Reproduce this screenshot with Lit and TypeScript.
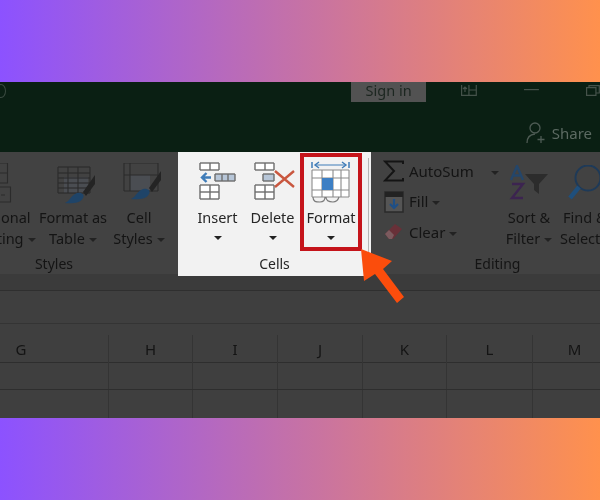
import { LitElement, html, css, svg } from "lit";
import { customElement } from "lit/decorators.js";

const caret = html`<svg class="caret" viewBox="0 0 8 4" width="8" height="4"><path d="M0 0H8L4 4Z" fill="currentColor"/></svg>`;

const grid = (x: number, y: number, cols: number[], rows: number[], s = "#6d6d6d", w = 1.4) => svg`
  ${cols.map((c) => svg`<line x1=${x + c} y1=${y} x2=${x + c} y2=${y + rows[rows.length - 1]} stroke=${s} stroke-width=${w}/>`)}
  ${rows.map((r) => svg`<line x1=${x} y1=${y + r} x2=${x + cols[cols.length - 1]} y2=${y + r} stroke=${s} stroke-width=${w}/>`)}`;

const insertIcon = html`<svg class="ic" width="37" height="38" viewBox="0 0 37 38" fill="none">
  <rect x="1" y="1" width="19" height="7" rx="1" fill="#fff"/>${grid(1, 1, [0, 10, 19], [0, 7])}
  <path d="M3 15.5H12M7.5 11L3 15.5L7.5 20" stroke="#3f7cb8" stroke-width="2.4"/>
  <rect x="16" y="12" width="20" height="7" fill="#b7c6d8"/>${grid(16, 12, [0, 7, 13, 20], [0, 7])}
  <rect x="1" y="23" width="19" height="14" fill="#fff"/>${grid(1, 23, [0, 10, 19], [0, 7, 14])}
</svg>`;

const deleteIcon = html`<svg class="ic" width="44" height="38" viewBox="0 0 44 38" fill="none">
  <rect x="4" y="1" width="19" height="7" rx="1" fill="#fff"/>${grid(4, 1, [0, 10, 19], [0, 7])}
  <rect x="12" y="12" width="11" height="7" fill="#b7c6d8"/>${grid(12, 12, [0, 11], [0, 7])}
  <rect x="4" y="23" width="19" height="14" fill="#fff"/>${grid(4, 23, [0, 10, 19], [0, 7, 14])}
  <path d="M24 9L43 25M43 9L24 25" stroke="#c9573f" stroke-width="2.4"/>
</svg>`;

const formatIcon = html`<svg class="ic" width="40" height="46" viewBox="0 0 40 46" fill="none">
  <path d="M1 3V9M38 3V9" stroke="#3f7cb8" stroke-width="1.5"/>
  <path d="M4 6H35" stroke="#3f7cb8" stroke-width="1"/>
  <path d="M8 3L4 6L8 9M31 3L35 6L31 9" stroke="#3f7cb8" stroke-width="1.4"/>
  <path d="M1 11H38V38H1Z" fill="#fff"/>
  ${grid(1, 11, [0, 10, 21, 29, 37], [0, 8, 20, 27], "#8a8a8a", 1.1)}
  <rect x="11" y="19" width="11" height="12" fill="#3d7fc4"/>
  <path d="M2 38C2 43 5 43 9 43C13 43 14 41 14 38M15 38C15 42 18 43 22 43C26 43 27 41 28 38" stroke="#7a7a7a" stroke-width="1.2"/>
</svg>`;

const tableBrush = (top: number, cols: number[], rows: number[], gx: number, gy: number, gw: number, gh: number) => html`<svg class="ic" width="42" height="44" viewBox="0 0 42 44" fill="none">
  <rect x=${gx} y=${gy} width=${gw} height=${gh} fill="#4a4d52"/>
  ${grid(1, top, cols, rows, "#2b2b2b", 1.1)}
  <path d="M${26} ${top + 25}L${38} ${top + 8}L${38} ${top + 17}L${29} ${top + 29}Z" fill="#242424"/>
  <path d="M8 ${top + 36}C13 ${top + 34} 14 ${top + 28} 20 ${top + 26}C25 ${top + 25} 28 ${top + 28} 26 ${top + 31}C24 ${top + 36} 14 ${top + 37} 8 ${top + 36}Z" fill="#1f4468"/>
</svg>`;

@customElement("app-root")
export class AppRoot extends LitElement {
  static styles = css`
    :host { display: block; width: 600px; height: 500px; padding: 82px 0; box-sizing: border-box;
      background: linear-gradient(90deg, #8c52ff, #ff914d); font-family: "Noto Sans", sans-serif; }
    .shot { position: relative; height: 336px; overflow: hidden; display: flex; flex-direction: column; background: #3f3f3f; filter: blur(0.35px); }
    .title { height: 70px; flex: none; background: #0a1f13; display: flex; flex-direction: column; }
    .win { display: flex; align-items: flex-start; height: 20px; }
    .dot { width: 8px; height: 12px; margin: 2px 0 0 -4px; border: 1px solid #3a4a40; border-radius: 50%; }
    .signin { margin-left: 345px; width: 76px; height: 20px; background: #525252; color: #1c2620; font-size: 14.5px; line-height: 17px; text-align: center; }
    .tb1 { margin: 3px 0 0 35px; }
    .tb2 { margin: 7px 0 0 47px; }
    .tb3 { margin: 3px 0 0 47px; }
    .sharerow { display: flex; justify-content: flex-end; align-items: center; gap: 7px; padding: 20px 8px 0 0; color: #5c6a62; font-size: 15px; line-height: 22px; }
    .ribbon { height: 124px; flex: none; display: flex; color: #141414; font-size: 14.5px; line-height: 21px;
      background: linear-gradient(#424242 122px, #3b3b3b 122px); }
    .group { display: flex; flex-direction: column; flex: none; }
    .btns { height: 102px; display: flex; }
    .gl { height: 22px; text-align: center; font-size: 14px; line-height: 20px; }
    .styles { width: 248px; margin-left: -70px; }
    .btn { flex: none; display: flex; flex-direction: column; align-items: center; text-align: center; white-space: nowrap; }
    .ic { display: block; flex: none; }
    .caret { display: inline-block; vertical-align: middle; margin-left: 4px; color: #222; }
    .icbox { height: 55px; display: flex; align-items: flex-start; justify-content: center; box-sizing: border-box; padding-top: 11px; }
    .b-cond { width: 83px; margin-left: 20px; }
    .b-fmt { width: 80px; }
    .b-fmt .icbox, .b-cell .icbox { padding-left: 10px; }
    .b-cell { width: 52px; }
    .cells { width: 193px; background: #f2f2f2; color: #262626; position: relative; }
    .cells .btns { padding-left: 12px; }
    .cells .caret { margin: 8px 0 0; }
    .cells .btn { width: 55px; }
    .cells .icbox { height: 55px; padding-top: 10px; }
    .b-format.b-format { width: 62px; height: 98px; margin: 1px 0 0 0; border: 4px solid #c5141b; box-sizing: border-box; }
    .b-format.b-format .icbox { height: 50px; padding-top: 2px; }
    .sep { position: absolute; right: 2px; top: 6px; bottom: 6px; width: 1.5px; background: #b5b5b5; }
    .edit { width: 229px; }
    .edit .btns { padding-left: 12px; }
    .edit .gl { margin-left: 24px; }
    .small { width: 123px; flex: none; display: flex; flex-direction: column; padding-top: 4px; font-size: 15px; }
    .srow { height: 30.5px; display: flex; align-items: center; gap: 5px; }
    .srow .ic { width: 21px; flex: none; }
    .sumcaret { margin-left: 8px; }
    .b-sort { width: 46px; }
    .b-sort .icbox, .b-find .icbox { padding-top: 13px; }
    .b-find { width: 60px; margin-left: 8px; align-items: flex-start; }
    .b-find .icbox { justify-content: flex-start; padding-left: 4px; }
    .find1 { padding-left: 3px; }
    .spacer1 { height: 14px; flex: none; background: #3b3b3b; border-bottom: 1px solid #2f2f2f; box-sizing: content-box; }
    .formula { height: 32px; flex: none; border-bottom: 1px solid #343434; box-sizing: content-box; }
    .pad { height: 11px; flex: none; }
    .row { display: grid; grid-template-columns: 109px 84px 85px 85px 84px 86px 67px; flex: none; border-bottom: 1px solid #2e2e2e; }
    .row > div { border-right: 1px solid #343434; box-sizing: border-box; }
    .row > div:last-child { border-right: 0; }
    .hdr { height: 27px; font-size: 15px; line-height: 28px; text-align: center; color: #141414; }
    .hdr > div:first-child { padding-right: 66px; }
    .hdr > div:last-child { padding-left: 16px; }
    .cell { height: 26px; }
    .cell.last { height: 28px; border-bottom: 0; }
    .arrow { position: absolute; left: 355px; top: 162px; }
  `;

  render() {
    const cols = ["H", "I", "J", "K", "L", "M"];
    const blank = Array.from({ length: 7 }, () => html`<div></div>`);
    return html`<div class="shot">
      <div class="title">
        <div class="win">
          <div class="dot"></div>
          <div class="signin">Sign in</div>
          <svg class="tb1" width="16" height="11" viewBox="0 0 16 11" fill="none" stroke="#45524a" stroke-width="1.2"><path d="M.6 0V10.4H15.4V0M8 0V10.4M8 5H15.4"/><path d="M4 7V2M2 4L4 2L6 4" /></svg>
          <svg class="tb2" width="15" height="2" viewBox="0 0 15 2"><rect width="15" height="1.2" fill="#45524a"/></svg>
          <svg class="tb3" width="14" height="11" viewBox="0 0 14 11" fill="none" stroke="#45524a" stroke-width="1.2"><path d="M.6 2.6H10V10.4H.6ZM3 2.6V.6H13.4V8H10"/></svg>
        </div>
        <div class="sharerow">
          <svg width="19" height="22" viewBox="0 0 19 22" fill="none" stroke="#4e5b54" stroke-width="1.3"><circle cx="9" cy="6" r="5"/><path d="M1 21C1 16 4 12.5 9 12M15 14V21M11.5 17.5H18.5"/></svg>
          <span>Share</span>
        </div>
      </div>
      <div class="ribbon">
        <div class="group styles">
          <div class="btns">
            <div class="btn b-cond">
              <div class="icbox"><svg class="ic" width="42" height="44" viewBox="0 0 42 44" fill="none" stroke="#2b2b2b" stroke-width="1.1"><path d="M22 0H36.500V20H22M22 10H36.500M28 24H39.500V39H28M30 32H34"/></svg></div>
              <div>Conditional</div><div>Formatting${caret}</div>
            </div>
            <div class="btn b-fmt">
              <div class="icbox">${tableBrush(4, [0, 10, 20, 32], [0, 6, 11, 16, 21, 26], 7, 14, 24, 16)}</div>
              <div>Format as</div><div>Table${caret}</div>
            </div>
            <div class="btn b-cell">
              <div class="icbox">${tableBrush(0, [0, 6, 34], [0, 12, 28], 7, 12, 20, 16)}</div>
              <div>Cell</div><div>Styles${caret}</div>
            </div>
          </div>
          <div class="gl">Styles</div>
        </div>
        <div class="group cells">
          <div class="btns">
            <div class="btn"><div class="icbox">${insertIcon}</div><div>Insert</div>${caret}</div>
            <div class="btn"><div class="icbox">${deleteIcon}</div><div>Delete</div>${caret}</div>
            <div class="btn b-format"><div class="icbox">${formatIcon}</div><div>Format</div>${caret}</div>
          </div>
          <div class="gl">Cells</div>
          <div class="sep"></div>
        </div>
        <div class="group edit">
          <div class="btns">
            <div class="small">
              <div class="srow"><svg class="ic" height="22" viewBox="0 0 21 22" fill="none" stroke="#141414" stroke-width="2"><path d="M20 4V1.500H2L11 11L2 20.500H20V18"/></svg><span>AutoSum</span><span class="sumcaret">${caret}</span></div>
              <div class="srow"><svg class="ic" height="22" viewBox="0 0 21 22" fill="none"><rect x="2" y="1" width="18" height="20" fill="#555" stroke="#2a2a2a" stroke-width="1.500"/><path d="M2 1H20V6H2Z" fill="#222"/><path d="M11 8V17M7 13L11 17L15 13" stroke="#1f4f86" stroke-width="2.200"/></svg><span>Fill${caret}</span></div>
              <div class="srow"><svg class="ic" height="20" viewBox="0 0 21 20" fill="none"><path d="M2 12L12 2L19 7L10 17H6Z" fill="#683038"/><path d="M2 12L6 8L11 13L9 17H6Z" fill="#7b5a5e"/></svg><span>Clear${caret}</span></div>
            </div>
            <div class="btn b-sort">
              <div class="icbox"><svg class="ic" width="42" height="36" viewBox="0 0 42 36" fill="none"><path d="M3 15L9 1L15 15M5.500 10.500H12.500" stroke="#24466a" stroke-width="2.400"/><path d="M4 19H15L4 33H15" stroke="#3c2450" stroke-width="2.400"/><path d="M17 9H40L31 19V29L26 25V19Z" fill="#2c2c2c"/></svg></div>
              <div>Sort &amp;</div><div>Filter${caret}</div>
            </div>
            <div class="btn b-find">
              <div class="icbox"><svg class="ic" width="42" height="36" viewBox="0 0 42 36" fill="none"><circle cx="24" cy="13" r="12.500" stroke="#1e3a58" stroke-width="2"/><path d="M15 22L6 33" stroke="#1f4f7c" stroke-width="4.500"/></svg></div>
              <div class="find1">Find &amp;</div><div>Select${caret}</div>
            </div>
          </div>
          <div class="gl">Editing</div>
        </div>
      </div>
      <div class="spacer1"></div>
      <div class="formula"></div>
      <div class="pad"></div>
      <div class="row hdr"><div>G</div>${cols.map((c) => html`<div>${c}</div>`)}</div>
      <div class="row cell">${blank}</div>
      <div class="row cell last">${blank}</div>
      <svg class="arrow" width="56" height="66" viewBox="355 244 56 66"><path d="M361 249L392 261L383 269L404 297L397 303L375 274L364 281Z" fill="#fb4d0c"/></svg>
    </div>`;
  }
}
